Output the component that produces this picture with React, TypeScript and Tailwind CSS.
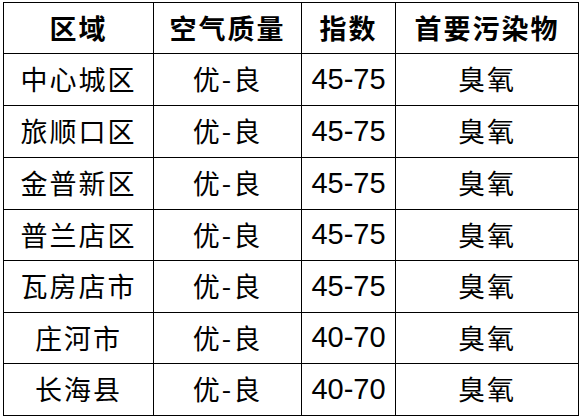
const rows = [
  ['中心城区', '优-良', '45-75', '臭氧'],
  ['旅顺口区', '优-良', '45-75', '臭氧'],
  ['金普新区', '优-良', '45-75', '臭氧'],
  ['普兰店区', '优-良', '45-75', '臭氧'],
  ['瓦房店市', '优-良', '45-75', '臭氧'],
  ['庄河市', '优-良', '40-70', '臭氧'],
  ['长海县', '优-良', '40-70', '臭氧'],
]

const heights = ['h-[52px]', 'h-[52px]', 'h-[52px]', 'h-[51px]', 'h-[52px]', 'h-[51px]', 'h-[52px]']

const cjk = "font-['Noto_Sans_CJK_SC',sans-serif]"
const num = "font-['Liberation_Sans','Noto_Sans_CJK_SC',sans-serif]"

export default function App() {
  return (
    <div className="h-[418px] w-[583px] bg-white pl-[3px] pt-[2px] text-black">
      <div className="grid w-[576px] grid-cols-[150px_148px_94px_183px] border-l border-t border-black">
        {['区域', '空气质量', '指数', '首要污染物'].map((h) => (
          <div
            key={h}
            className={`flex h-[51px] items-center justify-center border-b border-r border-black text-[27px] font-bold tracking-[2px] ${cjk}`}
          >
            {h}
          </div>
        ))}
        {rows.map((r, i) =>
          r.map((c, j) => (
            <div
              key={i + '-' + j}
              className={`flex ${heights[i]} items-center justify-center border-b border-r border-black ${
                j === 2 ? `${num} text-[29px]` : `${cjk} text-[27px] tracking-[2px]`
              }`}
            >
              {c}
            </div>
          ))
        )}
      </div>
    </div>
  )
}
